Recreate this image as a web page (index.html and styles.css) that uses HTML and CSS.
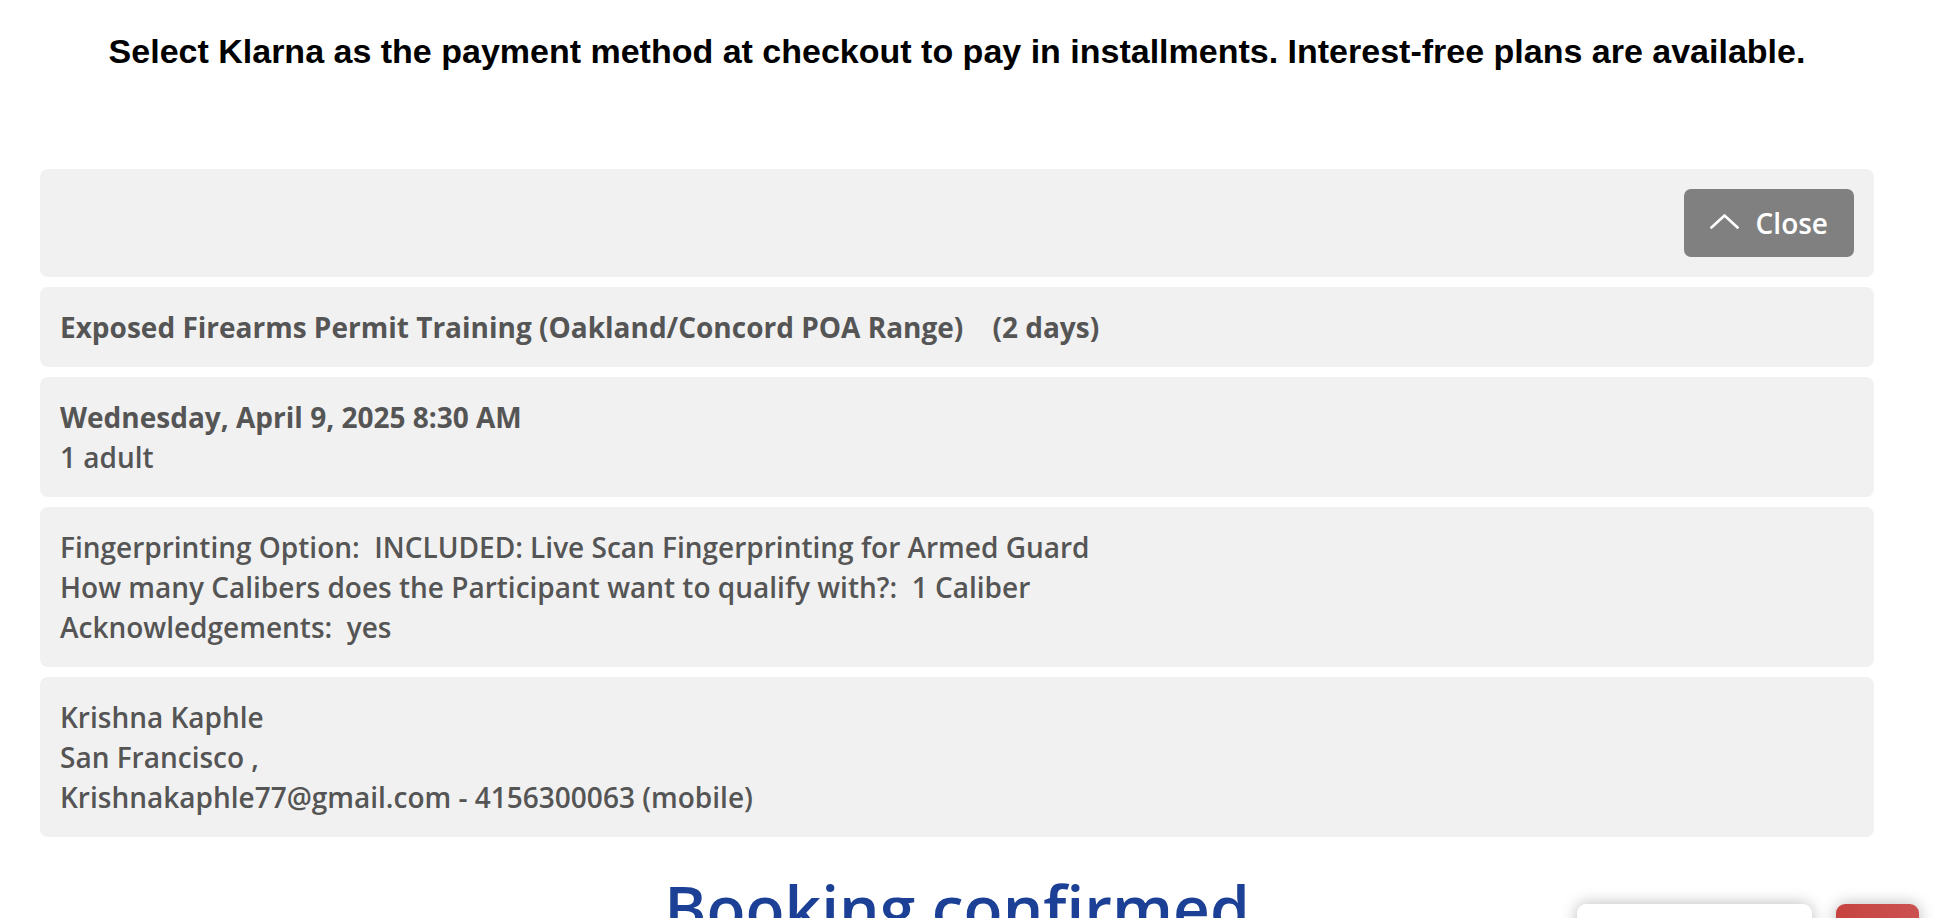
FILE: index.html
```html
<!DOCTYPE html>
<html lang="en">
<head>
<meta charset="utf-8">
<title>Booking confirmed</title>
<link rel="stylesheet" href="styles.css">
</head>
<body>
<main class="page">
  <p class="klarna">Select Klarna as the payment method at checkout to pay in installments. Interest-free plans are available.</p>

  <section class="summary">
    <div class="card card-top">
      <button class="close-btn" type="button">
        <svg class="chev" width="29" height="15" viewBox="0 0 29 15" aria-hidden="true">
          <path d="M1.5 13.5 L14.5 1.5 L27.5 13.5" fill="none" stroke="#ffffff" stroke-width="2.6" stroke-linecap="square" stroke-linejoin="miter"/>
        </svg>
        <span>Close</span>
      </button>
    </div>
    <div class="card">
      <div class="strong">Exposed Firearms Permit Training (Oakland/Concord POA Range)&nbsp;&nbsp;&nbsp;&nbsp;(2 days)</div>
    </div>
    <div class="card">
      <div class="strong">Wednesday, April 9, 2025 8:30 AM</div>
      <div>1 adult</div>
    </div>
    <div class="card">
      <div>Fingerprinting Option:&nbsp;&nbsp;INCLUDED: Live Scan Fingerprinting for Armed Guard</div>
      <div>How many Calibers does the Participant want to qualify with?:&nbsp;&nbsp;1 Caliber</div>
      <div>Acknowledgements:&nbsp;&nbsp;yes</div>
    </div>
    <div class="card">
      <div>Krishna Kaphle</div>
      <div>San Francisco ,</div>
      <div>Krishnakaphle77@gmail.com - 4156300063 (mobile)</div>
    </div>
  </section>

  <h1 class="confirmed">Booking confirmed</h1>
</main>

<div class="float-white"></div>
<div class="float-red"></div>
</body>
</html>
```

FILE: styles.css
```css
html, body {
  margin: 0;
  padding: 0;
  background: #ffffff;
}

.page {
  width: 1834px;
  margin-left: 40px;
  padding-top: 31px;
}

.klarna {
  margin: 0;
  text-align: center;
  font-family: "Liberation Sans", Arial, sans-serif;
  font-weight: 700;
  font-size: 34px;
  line-height: 40px;
  color: #000000;
}

.summary {
  margin-top: 98px;
  display: flex;
  flex-direction: column;
  gap: 10px;
}

.card {
  background: #f1f1f1;
  border-radius: 8px;
  padding: 20px;
  font-family: "Open Sans", sans-serif;
  font-weight: 600;
  font-size: 28px;
  line-height: 40px;
  color: #555555;
}

.strong {
  font-weight: 700;
}

.card-top {
  display: flex;
  justify-content: flex-end;
}

.close-btn {
  display: flex;
  align-items: center;
  gap: 17px;
  height: 68px;
  padding: 0 26px 0 26px;
  border: none;
  border-radius: 7px;
  background: #808080;
  color: #ffffff;
  font-family: "Open Sans", sans-serif;
  font-weight: 600;
  font-size: 28px;
  line-height: 1;
  cursor: pointer;
}

.chev {
  display: block;
  margin-top: -4px;
}

.confirmed {
  margin: 30px 0 0;
  text-align: center;
  font-family: "Open Sans", sans-serif;
  font-weight: 600;
  font-size: 64px;
  line-height: 82px;
  color: #1b4096;
}

.float-white {
  position: fixed;
  left: 1577px;
  bottom: -56px;
  width: 235px;
  height: 70px;
  background: #ffffff;
  border-radius: 9px;
  box-shadow: 0 0 16px rgba(0, 0, 0, 0.28);
}

.float-red {
  position: fixed;
  left: 1836px;
  bottom: -56px;
  width: 83px;
  height: 70px;
  background: linear-gradient(90deg, #c64440, #cb5151);
  border-radius: 9px;
  box-shadow: 0 0 16px rgba(0, 0, 0, 0.28);
}
```
